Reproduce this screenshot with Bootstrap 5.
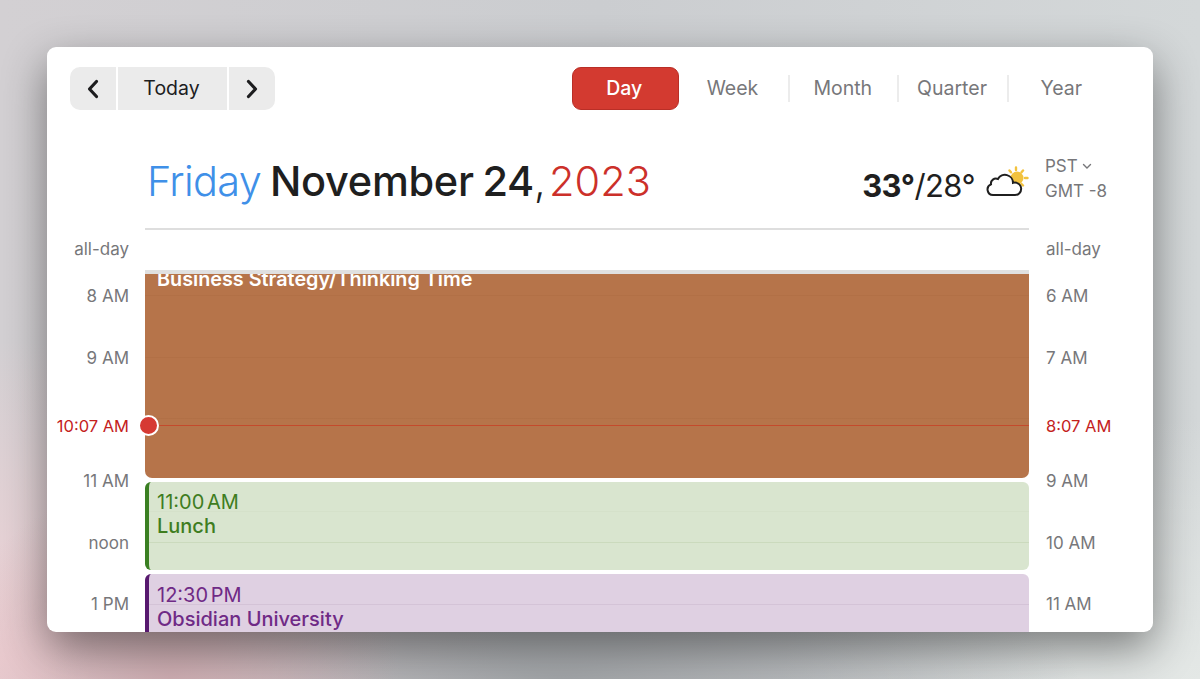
<!DOCTYPE html>
<html lang="en">
<head>
  <meta charset="UTF-8">
  <title>Calendar Day View</title>
  <link href="https://cdn.jsdelivr.net/npm/bootstrap@5.3.3/dist/css/bootstrap.min.css" rel="stylesheet">
  <style>
    html, body { height: 100%; }
    body {
      font-family: Inter, "Liberation Sans", sans-serif;
      overflow: hidden;
      background:
        radial-gradient(230px 200px at 170px 679px, rgba(205,170,175,.9) 0%, rgba(205,170,175,0) 100%),
        radial-gradient(520px 120px at 560px 679px, rgba(160,163,166,.95) 0%, rgba(160,163,166,0) 100%),
        radial-gradient(520px 320px at 0 660px, #f0d2d6 0%, rgba(240,210,214,0) 100%),
        radial-gradient(420px 260px at 1200px 679px, #e4e8e6 0%, rgba(228,232,230,0) 100%),
        linear-gradient(90deg, #d3d0d3 0%, #cbcdd0 50%, #d4d8d9 100%);
      padding: 47px;
    }
    .cal-window {
      height: 585px;
      background: #fff;
      border-radius: 9px;
      overflow: hidden;
      box-shadow: 0 16px 44px rgba(0,0,0,.45);
    }
    .cal-toolbar { height: 83px; padding: 20px 37px 0 23px; }
    .seg-btn {
      height: 43px;
      background: #ebebeb;
      border: 0;
      border-radius: 0;
      color: #1d1d1f;
      font-size: 19.5px;
      padding: 0;
      display: flex;
      align-items: center;
      justify-content: center;
    }
    .seg-prev { width: 46px; border-radius: 10px 0 0 10px !important; }
    .seg-today { width: 109px; margin-left: 2px !important; padding-right: 2px; }
    .seg-next { width: 46px; margin-left: 2px !important; border-radius: 0 10px 10px 0 !important; }
    .view-tabs { height: 43px; }
    .view-tab {
      width: 109.3px;
      height: 27px;
      color: #77777a;
      font-size: 19.5px;
      line-height: 27px;
      text-align: center;
      text-decoration: none;
      border-left: 2px solid #ececec;
      padding-right: 2px;
    }
    .view-tab.is-plain { border-left: 0; }
    .view-active {
      width: 107px;
      height: 43px;
      background: #d33a30;
      border: 1px solid #b92f27;
      border-radius: 9px;
      color: #fff;
      font-size: 19.5px;
      font-weight: 500;
      line-height: 41px;
      text-align: center;
      text-decoration: none;
      padding-right: 2px;
    }
    .cal-head { height: 100px; }
    .gutter-l { width: 98px; flex: none; }
    .gutter-r { width: 124px; flex: none; }
    .day-col { width: 884px; flex: none; }
    .head-main { height: 100px; border-bottom: 2px solid #dedede; padding: 0 0 12px 2px; }
    .cal-title { font-size: 41.5px; line-height: 1; letter-spacing: -.7px; margin: 0; font-weight: 300; color: #1f1f1f; padding-top: 31px; white-space: nowrap; word-spacing: -2px; }
    .t-friday { color: #3f90e8; }
    .t-date { font-weight: 500; letter-spacing: -.3px; }
    .t-comma { margin-right: -5px; }
    .t-year { color: #cc302a; letter-spacing: .1px; }
    .weather { padding-top: 37px; font-size: 31px; color: #1f1f1f; font-weight: 400; line-height: 1.2; white-space: nowrap; letter-spacing: -.6px; }
    .weather strong { font-weight: 700; }
    .weather svg { margin-top: -4px; margin-left: 10px; }
    .tz-box { padding: 24px 0 0 16px; color: #77777a; font-size: 17px; line-height: 25px; }
    .allday-row { height: 40px; }
    .time-lbl { color: #77777a; font-size: 17px; white-space: nowrap; }
    .allday-row .time-lbl { line-height: 38px; }
    .gutter-l.time-lbl, .gutter-l .time-lbl { text-align: right; padding-right: 16px; }
    .gutter-r.time-lbl, .gutter-r .time-lbl { padding-left: 17px; }
    .cal-grid { height: 362px; overflow: hidden; }
    .slot { height: 61.6px; line-height: 20px; display: flex; align-items: center; }
    .slot > div { width: 100%; }
    .slot:first-child { margin-top: -4.4px; }
    .slot-now { padding-top: 12px; color: #c4211c; font-size: 16.5px; }
    .allday-strip { height: 4px; background: #e0e0e0; }
    .ev {
      position: relative;
      font-size: 20px;
      line-height: 24px;
      border-radius: 5px;
    }
    .ev-brown {
      height: 204px;
      margin-bottom: 4px;
      padding-left: 12px;
      background:
        repeating-linear-gradient(180deg, transparent 0, transparent 21px, rgba(120,60,20,.07) 21px, rgba(120,60,20,.07) 22px, transparent 22px, transparent 61.6px),
        #b6744a;
      border-radius: 0 0 7px 7px;
      color: #fff;
      font-weight: 600;
      font-size: 19.8px;
    }
    .ev-clip { height: 24px; overflow: hidden; }
    .ev-clip span { display: block; margin-top: -7px; line-height: 24px; }
    .ev-time { word-spacing: -3px; }
    .ev-green {
      height: 88px;
      margin-bottom: 4px;
      background:
        linear-gradient(180deg, transparent 29px, #d5e1ca 29px, #d5e1ca 30px, transparent 30px),
        linear-gradient(180deg, transparent 60px, #cbdabd 60px, #cbdabd 61px, transparent 61px),
        #d9e5cf;
      border-left: 4px solid #3a7f22;
      padding-left: 8px;
      padding-top: 8px;
      color: #3f7d1f;
      border-radius: 6px;
    }
    .ev-purple {
      height: 70px;
      background: linear-gradient(180deg, transparent 30px, #d4c3d7 30px, #d4c3d7 31px, transparent 31px), #dfd0e2;
      border-left: 4px solid #57186e;
      padding-left: 8px;
      padding-top: 9px;
      color: #6f2a86;
      border-radius: 6px 6px 0 0;
    }
    .ev-name { font-weight: 500; }
    .now-line { position: absolute; left: 0; right: 0; top: 151px; height: 1px; background: #c44a2c; }
    .now-dot {
      position: absolute;
      left: -7px;
      top: 141px;
      width: 21px;
      height: 21px;
      border-radius: 50%;
      background: #d63a33;
      border: 2px solid #fff;
    }
  </style>
</head>
<body>

<div class="cal-window">
  <!-- toolbar -->
  <div class="cal-toolbar d-flex justify-content-between">
    <div class="btn-group">
      <button class="btn seg-btn seg-prev" aria-label="Previous">
        <svg width="14" height="20" viewBox="0 0 14 20"><path d="M10.500 2.500 3.500 10l7 7.500" fill="none" stroke="#1d1d1f" stroke-width="3.200" stroke-linecap="round" stroke-linejoin="round"/></svg>
      </button>
      <button class="btn seg-btn seg-today">Today</button>
      <button class="btn seg-btn seg-next" aria-label="Next">
        <svg width="14" height="20" viewBox="0 0 14 20"><path d="M3.500 2.500 10.500 10l-7 7.500" fill="none" stroke="#1d1d1f" stroke-width="3.200" stroke-linecap="round" stroke-linejoin="round"/></svg>
      </button>
    </div>
    <div class="view-tabs d-flex align-items-center">
      <a class="view-active" href="#">Day</a>
      <a class="view-tab is-plain" href="#">Week</a>
      <a class="view-tab" href="#">Month</a>
      <a class="view-tab" href="#">Quarter</a>
      <a class="view-tab" href="#">Year</a>
    </div>
  </div>

  <!-- date header -->
  <div class="cal-head d-flex">
    <div class="gutter-l"></div>
    <div class="day-col head-main d-flex justify-content-between">
      <h1 class="cal-title"><span class="t-friday">Friday</span> <span class="t-date">November 24</span><span class="t-comma">,</span> <span class="t-year">2023</span></h1>
      <div class="weather d-flex align-items-start">
        <span><strong>33°</strong>/28°</span>
        <svg width="44" height="36" viewBox="0 0 44 36">
          <path d="M31 4.500v2.500M38 7.500l-1.500 1.800M42.500 15H40M38 22.500l-1.500-1.500M24.500 7.500l1.500 1.800" stroke="#f2c23e" stroke-width="2.400" stroke-linecap="round"/>
          <circle cx="32" cy="15" r="6.500" fill="#f2c23e"/>
          <path d="M8 32h22a6.200 6.200 0 0 0 0-12.400c-.7 0-1.400.1-2 .3A8 8 0 0 0 13 16 5 5 0 0 0 6 21.400 5.500 5.500 0 0 0 8 32Z" fill="#fff" stroke="#1f1f1f" stroke-width="2"/>
        </svg>
      </div>
    </div>
    <div class="gutter-r tz-box">
      <div class="d-flex align-items-center">PST
        <svg class="ms-1" width="10" height="7" viewBox="0 0 10 7"><path d="M1.500 1.500 5 5l3.500-3.500" fill="none" stroke="#77777a" stroke-width="1.400" stroke-linecap="round"/></svg>
      </div>
      <div>GMT -8</div>
    </div>
  </div>

  <!-- all-day row -->
  <div class="allday-row d-flex">
    <div class="gutter-l"><div class="time-lbl">all-day</div></div>
    <div class="day-col"></div>
    <div class="gutter-r"><div class="time-lbl">all-day</div></div>
  </div>

  <!-- hours -->
  <div class="cal-grid d-flex">
    <div class="gutter-l time-lbl">
      <div class="slot"><div>8 AM</div></div>
      <div class="slot"><div>9 AM</div></div>
      <div class="slot slot-now"><div>10:07 AM</div></div>
      <div class="slot"><div>11 AM</div></div>
      <div class="slot"><div>noon</div></div>
      <div class="slot"><div>1 PM</div></div>
    </div>
    <div class="day-col">
      <div class="allday-strip"></div>
      <div class="ev ev-brown">
        <div class="ev-clip"><span>Business Strategy/Thinking Time</span></div>
        <div class="now-line"></div>
        <div class="now-dot"></div>
      </div>
      <div class="ev ev-green">
        <div class="ev-time">11:00 AM</div>
        <div class="ev-name">Lunch</div>
      </div>
      <div class="ev ev-purple">
        <div class="ev-time">12:30 PM</div>
        <div class="ev-name">Obsidian University</div>
      </div>
    </div>
    <div class="gutter-r time-lbl">
      <div class="slot"><div>6 AM</div></div>
      <div class="slot"><div>7 AM</div></div>
      <div class="slot slot-now"><div>8:07 AM</div></div>
      <div class="slot"><div>9 AM</div></div>
      <div class="slot"><div>10 AM</div></div>
      <div class="slot"><div>11 AM</div></div>
    </div>
  </div>
</div>

<script src="https://cdn.jsdelivr.net/npm/bootstrap@5.3.3/dist/js/bootstrap.bundle.min.js"></script>
</body>
</html>
